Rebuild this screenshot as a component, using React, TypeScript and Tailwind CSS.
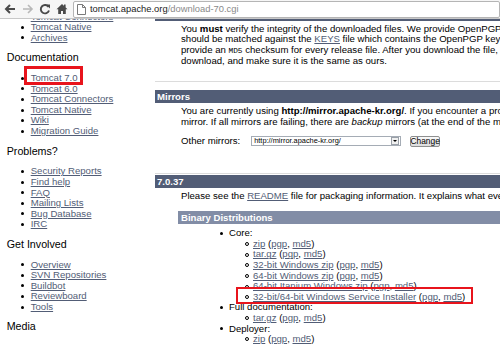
import React from "react";

const LINK = "text-[#525D76] underline decoration-[1px] underline-offset-[1px]";

function NavItem({ children }: { children: React.ReactNode }) {
  return (
    <div className="flex items-center h-[10.6px] pl-[21px] whitespace-nowrap">
      <span className="w-[3px] h-[3px] rounded-full bg-black shrink-0" />
      <a className={"ml-[6.7px] " + LINK}>{children}</a>
    </div>
  );
}

function NavHeading({ children }: { children: React.ReactNode }) {
  return (
    <div className="mt-[8px] mb-[8.7px] h-[13px] leading-[13px] text-[10.7px] pl-[6.7px] text-black">
      {children}
    </div>
  );
}

function LeftNav() {
  return (
    <div className="w-[155px] shrink-0 text-[9.6px] mt-[-7.5px]">
      <NavItem>Tomcat Connectors</NavItem>
      <NavItem>Tomcat Native</NavItem>
      <NavItem>Archives</NavItem>
      <NavHeading>Documentation</NavHeading>
      <NavItem>Tomcat 7.0</NavItem>
      <NavItem>Tomcat 6.0</NavItem>
      <NavItem>Tomcat Connectors</NavItem>
      <NavItem>Tomcat Native</NavItem>
      <NavItem>Wiki</NavItem>
      <NavItem>Migration Guide</NavItem>
      <NavHeading>Problems?</NavHeading>
      <NavItem>Security Reports</NavItem>
      <NavItem>Find help</NavItem>
      <NavItem>FAQ</NavItem>
      <NavItem>Mailing Lists</NavItem>
      <NavItem>Bug Database</NavItem>
      <NavItem>IRC</NavItem>
      <NavHeading>Get Involved</NavHeading>
      <NavItem>Overview</NavItem>
      <NavItem>SVN Repositories</NavItem>
      <NavItem>Buildbot</NavItem>
      <NavItem>Reviewboard</NavItem>
      <NavItem>Tools</NavItem>
      <NavHeading>Media</NavHeading>
    </div>
  );
}

function Sig() {
  return (
    <>
      {" "}(<a className={LINK}>pgp</a>, <a className={LINK}>md5</a>)
    </>
  );
}

function Row({
  kind,
  marker,
  children,
}: {
  kind: "disc" | "circle";
  marker: number;
  children: React.ReactNode;
}) {
  return (
    <div className="flex items-center h-[10.6px] whitespace-nowrap" style={{ paddingLeft: marker }}>
      {kind === "disc" ? (
        <span className="w-[3px] h-[3px] rounded-full bg-black shrink-0" />
      ) : (
        <span className="w-[4px] h-[4px] rounded-full border border-black shrink-0" />
      )}
      <span className={kind === "disc" ? "ml-[6.5px]" : "ml-[4px]"}>{children}</span>
    </div>
  );
}

function Main() {
  return (
    <div className="flex-1 min-w-0 overflow-hidden text-[9.6px] leading-[10.45px] whitespace-nowrap text-black">
      <div className="h-[2px] bg-[#525D76]" />
      <div className="mt-[2.8px] pl-[26px]">
        <div>
          You <b>must</b> verify the integrity of the downloaded files. We provide OpenPGP signatures for every release file. This signature
        </div>
        <div>
          should be matched against the <a className={LINK}>KEYS</a> file which contains the OpenPGP keys of Tomcat's Release Managers. We also
        </div>
        <div>
          provide an <code className="font-['Liberation_Mono',monospace] text-[7.8px]">MD5</code> checksum for every release file. After you download the file, you should calculate a checksum for your
        </div>
        <div>download, and make sure it is the same as ours.</div>
      </div>

      <div className="mt-[14.4px] h-px bg-[#dcdcdc]" />
      <div className="mt-[8px] h-[13px] bg-[#525D76] text-white font-bold leading-[13px] pl-[2px]">Mirrors</div>
      <div className="mt-[3.3px] pl-[26px]">
        <div>
          You are currently using <b>http://mirror.apache-kr.org/</b>. If you encounter a problem with this mirror, please select another
        </div>
        <div>
          mirror. If all mirrors are failing, there are <i>backup</i> mirrors (at the end of the mirrors list) that should be available.
        </div>
      </div>
      <div className="mt-[8.3px] pl-[26px] flex items-center h-[11px]">
        <span>Other mirrors:</span>
        <div className="ml-[11px] w-[150px] h-[10px] border border-[#a5acb5] bg-white flex items-center justify-between">
          <span className="pl-[2px] text-[7.4px] leading-[8px]">http://mirror.apache-kr.org/</span>
          <span className="w-[8px] h-[8px] border border-[#9aa0a8] bg-[#f0f0f0] flex items-center justify-center mr-px">
            <span className="w-0 h-0 border-l-[2px] border-r-[2px] border-t-[2.5px] border-l-transparent border-r-transparent border-t-black" />
          </span>
        </div>
        <div className="ml-[9px] w-[30px] h-[11px] border border-[#8e8f8f] rounded-[2px] bg-gradient-to-b from-[#fafafa] to-[#dcdcdc] text-[8.4px] leading-[9px] flex items-center justify-center">
          Change
        </div>
      </div>

      <div className="mt-[26.5px] h-px bg-[#dcdcdc]" />
      <div className="mt-[1px] h-[13px] bg-[#525D76] text-white font-bold leading-[13px] pl-[2px]">7.0.37</div>
      <div className="mt-[3.3px] pl-[26px]">
        <div>
          Please see the <a className={LINK}>README</a> file for packaging information. It explains what every distribution contains.
        </div>
      </div>
      <div className="mt-[8.8px] ml-[23px] h-[13px] bg-[#828DA6] text-white font-bold leading-[13px] pl-[3px]">
        Binary Distributions
      </div>
      <div className="mt-[4.7px]">
        <Row kind="disc" marker={64.5}>Core:</Row>
        <Row kind="circle" marker={90}>
          <a className={LINK}>zip</a>
          <Sig />
        </Row>
        <Row kind="circle" marker={90}>
          <a className={LINK}>tar.gz</a>
          <Sig />
        </Row>
        <Row kind="circle" marker={90}>
          <a className={LINK}>32-bit Windows zip</a>
          <Sig />
        </Row>
        <Row kind="circle" marker={90}>
          <a className={LINK}>64-bit Windows zip</a>
          <Sig />
        </Row>
        <Row kind="circle" marker={90}>
          <a className={LINK}>64-bit Itanium Windows zip</a>
          <Sig />
        </Row>
        <Row kind="circle" marker={90}>
          <a className={LINK}>32-bit/64-bit Windows Service Installer</a>
          <Sig />
        </Row>
        <Row kind="disc" marker={64.5}>Full documentation:</Row>
        <Row kind="circle" marker={90}>
          <a className={LINK}>tar.gz</a>
          <Sig />
        </Row>
        <Row kind="disc" marker={64.5}>Deployer:</Row>
        <Row kind="circle" marker={90}>
          <a className={LINK}>zip</a>
          <Sig />
        </Row>
      </div>
    </div>
  );
}

function Toolbar() {
  return (
    <div className="h-[19px] bg-[#f6f6f6] border-b border-[#c8c8c8] flex items-center relative z-10">
      <svg width="12" height="12" viewBox="0 0 12 12" className="ml-[4px]">
        <path d="M11 6H2.5M6 2L2 6l4 4" stroke="#4a4a4a" strokeWidth="2" fill="none" />
      </svg>
      <svg width="12" height="12" viewBox="0 0 12 12" className="ml-[6px]">
        <path d="M1 6h8.5M6 2l4 4-4 4" stroke="#b8b8b8" strokeWidth="1.6" fill="none" />
      </svg>
      <svg width="12" height="12" viewBox="0 0 12 12" className="ml-[5px]">
        <path d="M9.6 4A4.2 4.2 0 1 0 10 7.5" stroke="#4a4a4a" strokeWidth="1.9" fill="none" />
        <path d="M7 1.5h4v4z" fill="#4a4a4a" />
      </svg>
      <svg width="12" height="12" viewBox="0 0 12 12" className="ml-[5px]">
        <path d="M6 1L0.5 6.2H2.2V11H5V8h2v3h2.8V6.2h1.7z" fill="#4a4a4a" />
        <rect x="8" y="1.5" width="1.6" height="3" fill="#4a4a4a" />
      </svg>
      <div className="ml-[5px] flex-1 h-[17px] bg-white border border-[#b5b5b5] rounded-[2px] flex items-center">
        <svg width="9" height="11" viewBox="0 0 9 11" className="ml-[3px]">
          <path d="M0.5 0.5h5l3 3v7h-8z M5.5 0.5v3h3" stroke="#7a7a7a" strokeWidth="1" fill="white" />
        </svg>
        <span className="ml-[4px] text-[9.4px] leading-none whitespace-nowrap font-['Liberation_Sans',Arial,sans-serif]">
          <span className="text-[#222]">tomcat.apache.org</span>
          <span className="text-[#8a8a8a]">/download-70.cgi</span>
        </span>
      </div>
    </div>
  );
}

export default function App() {
  return (
    <div className="w-[500px] h-[344px] overflow-hidden bg-white relative font-['Liberation_Sans',Arial,sans-serif]">
      <Toolbar />
      <div className="flex h-[325px] overflow-hidden">
        <LeftNav />
        <Main />
      </div>
      <div className="absolute left-[24px] top-[66px] w-[59px] h-[19px] border-[3px] border-[#e8141c] pointer-events-none" />
      <div className="absolute left-[236px] top-[287px] w-[237px] h-[17px] border-2 border-[#e8141c] pointer-events-none" />
    </div>
  );
}
